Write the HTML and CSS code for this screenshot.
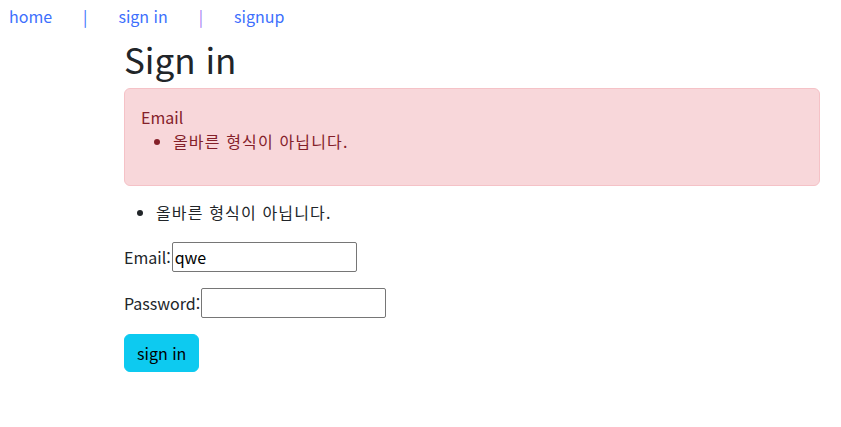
FILE: index.html
```html
<!DOCTYPE html>
<html lang="ko">
<head>
<meta charset="utf-8">
<title>Sign in</title>
<link rel="stylesheet" href="styles.css">
</head>
<body>
<nav class="topnav">
  <a class="nav-link" href="#">home</a>
  <span class="sep">|</span>
  <a class="nav-link" href="#">sign in</a>
  <span class="sep sep-visited">|</span>
  <a class="nav-link" href="#">signup</a>
</nav>
<main class="container">
  <h1 class="title">Sign in</h1>
  <div class="alert">
    <div class="alert-field">Email</div>
    <ul class="alert-list">
      <li class="ko">올바른 형식이 아닙니다.</li>
    </ul>
  </div>
  <ul class="errors">
    <li class="ko">올바른 형식이 아닙니다.</li>
  </ul>
  <form class="form">
    <p class="row"><label>Email:</label> <input class="field" type="text" value="qwe"></p>
    <p class="row"><label>Password:</label> <input class="field" type="password"></p>
    <button class="btn" type="button">sign in</button>
  </form>
</main>
</body>
</html>
```

FILE: styles.css
```css
* { box-sizing: border-box; }
body {
  margin: 0;
  font-family: "Noto Sans CJK KR", "Noto Sans", sans-serif;
  font-size: 16px;
  line-height: 1.5;
  color: #212529;
  background: #fff;
}
.topnav {
  display: flex;
  align-items: center;
  padding: 1px 9px 0;
  height: 30px;
}
.nav-link {
  color: #3d6ffd;
  text-decoration: none;
}
.sep {
  color: #3d6ffd;
  margin: 0 31px;
}
.sep-visited { color: #a57cf4; }
.container {
  width: 720px;
  margin-left: 112px;
  padding: 0 12px;
}
.title {
  margin: 8px 0 8px;
  font-size: 35px;
  font-weight: 400;
  line-height: 1.2;
}
.alert {
  background: #f8d7da;
  border: 1px solid #f5c2c7;
  color: #842029;
  border-radius: 6px;
  padding: 16px;
  margin-bottom: 14px;
}
.alert-list, .errors {
  margin: 0 0 16px;
  padding-left: 32px;
}
.errors { margin-bottom: 18px; }
.ko { letter-spacing: 1.15px; }
.form { margin: 0; }
.row {
  margin: 0 0 16px;
  display: flex;
  align-items: center;
  gap: 1px;
}
.field {
  font: inherit;
  width: 185px;
  height: 30px;
  padding: 1px 2px;
  border: 1px solid #767676;
  border-radius: 2px;
  color: #000;
}
.btn {
  font: inherit;
  background: #0dcaf0;
  color: #000;
  border: 1px solid #0dcaf0;
  border-radius: 6px;
  padding: 6px 12px;
  line-height: 1.5;
}
```
